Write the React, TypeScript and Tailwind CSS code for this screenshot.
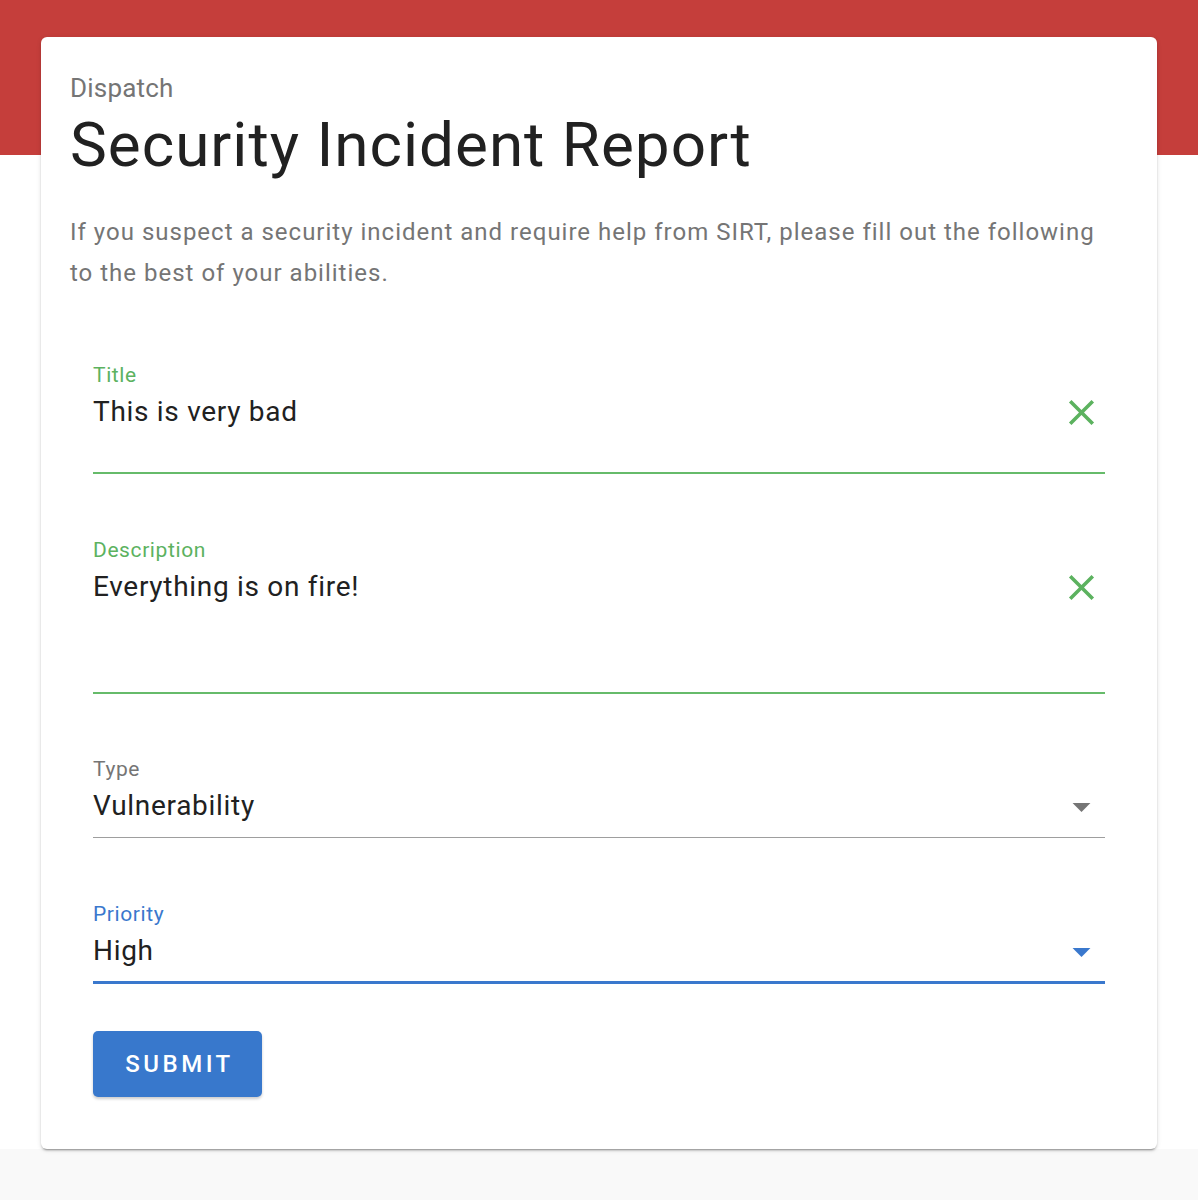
import React from 'react';

const CloseIcon = () => (
  <svg viewBox="0 0 24 24" className="w-[43px] h-[43px] fill-[#5cb25f]">
    <path d="M19 6.41L17.59 5 12 10.59 6.41 5 5 6.41 10.59 12 5 17.59 6.41 19 12 13.41 17.59 19 19 17.59 13.41 12z" />
  </svg>
);

const ArrowDrop = ({ color }: { color: string }) => (
  <svg viewBox="0 0 24 24" className={`w-[43px] h-[43px] ${color}`}>
    <path d="M7 10l5 5 5-5z" />
  </svg>
);

const App: React.FC = () => {
  return (
    <div className="min-h-[1200px] bg-[#f9f9f9] font-['Roboto','Liberation_Sans',sans-serif]">
      <section className="bg-white">
        <div className="h-[155px] bg-[#c53e3b]" />
        <div className="mx-[41px] -mt-[118px] relative bg-white rounded-[6px] px-[29px] pt-[35px] pb-[52px] shadow-[0_3px_1px_-2px_rgba(0,0,0,0.2),0_2px_2px_0_rgba(0,0,0,0.14),0_1px_5px_0_rgba(0,0,0,0.12)]">
          <div className="text-[26px] leading-[32px] text-[#757575] tracking-[0.2px]">Dispatch</div>
          <h1 className="mt-[5px] text-[62px] leading-[72px] text-[#212121] tracking-[1px]">Security Incident Report</h1>
          <p className="mt-[31px] pr-[28px] text-[24px] leading-[41px] text-[#757575] tracking-[1px]">
            If you suspect a security incident and require help from SIRT, please fill out the following to the best of your abilities.
          </p>

          <form className="px-[23px]" onSubmit={(e) => e.preventDefault()}>
            {/* Title */}
            <div className="mt-[69px] border-b-2 border-[#66bb6a] pb-[42px]">
              <div className="text-[21px] leading-[24px] text-[#5cb25f] tracking-[0.6px]">Title</div>
              <div className="mt-[7px] h-[36px] flex items-center justify-between">
                <span className="text-[28px] leading-[36px] text-[#212121] tracking-[0.7px]">This is very bad</span>
                <span className="mr-[2px]"><CloseIcon /></span>
              </div>
            </div>

            {/* Description */}
            <div className="mt-[64px] border-b-2 border-[#66bb6a] pb-[87px]">
              <div className="text-[21px] leading-[24px] text-[#5cb25f] tracking-[0.6px]">Description</div>
              <div className="mt-[7px] h-[36px] flex items-center justify-between">
                <span className="text-[28px] leading-[36px] text-[#212121] tracking-[0.7px]">Everything is on fire!</span>
                <span className="mr-[2px]"><CloseIcon /></span>
              </div>
            </div>

            {/* Type */}
            <div className="mt-[63px] border-b border-[#9e9e9e] pb-[13px]">
              <div className="text-[21px] leading-[24px] text-[#757575] tracking-[0.6px]">Type</div>
              <div className="mt-[7px] h-[36px] flex items-center justify-between">
                <span className="text-[28px] leading-[36px] text-[#212121] tracking-[0.7px]">Vulnerability</span>
                <span className="mr-[2px]"><ArrowDrop color="fill-[#757575]" /></span>
              </div>
            </div>

            {/* Priority */}
            <div className="mt-[64px] border-b-[3px] border-[#3a78cd] pb-[12px]">
              <div className="text-[21px] leading-[24px] text-[#3a78cd] tracking-[0.6px]">Priority</div>
              <div className="mt-[7px] h-[36px] flex items-center justify-between">
                <span className="text-[28px] leading-[36px] text-[#212121] tracking-[0.7px]">High</span>
                <span className="mr-[2px]"><ArrowDrop color="fill-[#3a78cd]" /></span>
              </div>
            </div>

            <button
              type="submit"
              className="mt-[47px] h-[66px] w-[169px] pl-[4px] rounded-[5px] bg-[#3878cc] text-white text-[24px] font-medium tracking-[3.5px] shadow-[0_2px_3px_rgba(0,0,0,0.2)]"
            >
              SUBMIT
            </button>
          </form>
        </div>
      </section>
    </div>
  );
};

export default App;
